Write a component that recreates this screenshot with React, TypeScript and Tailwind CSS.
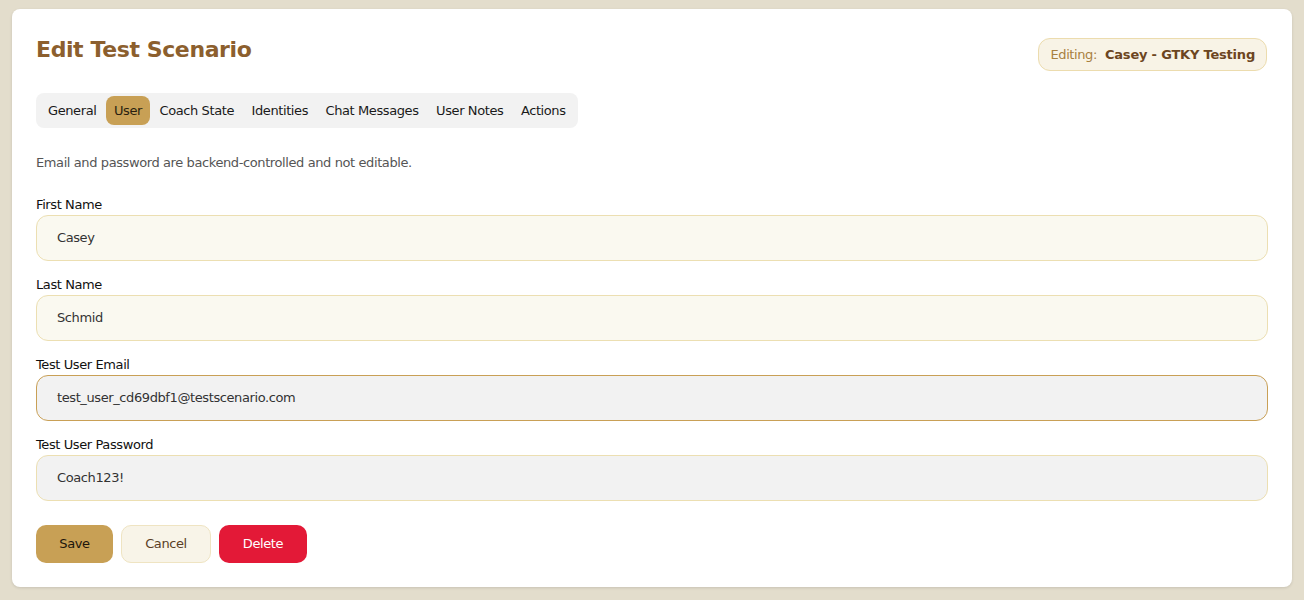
export default function App() {
  const tabs = ["General", "User", "Coach State", "Identities", "Chat Messages", "User Notes", "Actions"];
  return (
    <div className="min-h-[600px] bg-[#e3ddcc] p-[9px_12px_13px_12px] tracking-[-0.4px]" style={{ fontFamily: '"DejaVu Sans", sans-serif' }}>
      <div className="bg-white rounded-lg shadow-[0_1px_3px_rgba(0,0,0,0.12)] px-6 pt-6 pb-6 h-[578px]">
        <div className="flex items-start justify-between">
          <h1 className="text-[22px] font-bold text-[#8c5f2e] tracking-[-0.4px] leading-[30px] mt-[2px]">Edit Test Scenario</h1>
          <div className="mt-[5px] mr-[1px] h-[33px] px-[11px] flex items-center gap-2 rounded-xl border border-[#ecdcae] bg-[#f8f3e6] text-[13px]">
            <span className="text-[#a8803f]">Editing:</span>
            <span className="font-bold text-[#6c4521] tracking-[-0.2px]">Casey - GTKY Testing</span>
          </div>
        </div>
        <div className="mt-[22px] inline-flex items-center gap-[1.5px] bg-[#f2f2f2] rounded-lg p-[4px] h-[35px] text-[13px] text-[#1a1a1a]">
          {tabs.map((t) => (
            <div key={t} className={"px-[8px] h-[29px] flex items-center rounded-lg " + (t === "User" ? "bg-[#c8a055] text-[#2a1f10]" : "")}>
              {t}
            </div>
          ))}
        </div>
        <p className="mt-[26px] text-[13px] text-[#555] leading-[18px]">Email and password are backend-controlled and not editable.</p>
        <div className="mt-[24px] flex flex-col gap-[15px]">
          {[
            ["First Name", "Casey", "bg-[#faf9f0] border-[#ecdfb2]"],
            ["Last Name", "Schmid", "bg-[#faf9f0] border-[#ecdfb2]"],
            ["Test User Email", "test_user_cd69dbf1@testscenario.com", "bg-[#f2f2f2] border-[#c9a056]"],
            ["Test User Password", "Coach123!", "bg-[#f2f2f2] border-[#ecdfb2]"],
          ].map(([l, v, c]) => (
            <div key={l}>
              <div className="text-[13px] text-[#111] leading-[18px]">{l}</div>
              <div className={"mt-[1px] h-[46px] rounded-xl border flex items-center px-5 text-[13px] text-[#333] " + c}>{v}</div>
            </div>
          ))}
        </div>
        <div className="mt-[24px] flex gap-2 text-[13px]">
          <button className="h-[38px] w-[77px] rounded-[10px] bg-[#c8a055] text-[#1d160c]">Save</button>
          <button className="h-[38px] w-[90px] rounded-[10px] bg-[#f8f4e8] border border-[#efe4c2] text-[#5a3f26]">Cancel</button>
          <button className="h-[38px] w-[88px] rounded-[10px] bg-[#e31937] text-white">Delete</button>
        </div>
      </div>
    </div>
  );
}
